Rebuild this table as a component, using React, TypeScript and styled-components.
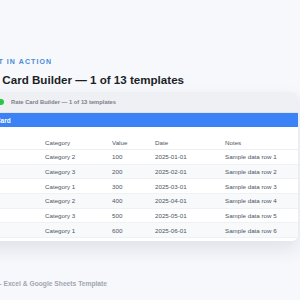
import * as React from 'react';
import styled, { createGlobalStyle } from 'styled-components';

const rows = [
    { item: 'Item 1', category: 'Category 2', value: 100, date: '2025-01-01', notes: 'Sample data row 1' },
    { item: 'Item 2', category: 'Category 3', value: 200, date: '2025-02-01', notes: 'Sample data row 2' },
    { item: 'Item 3', category: 'Category 1', value: 300, date: '2025-03-01', notes: 'Sample data row 3' },
    { item: 'Item 4', category: 'Category 2', value: 400, date: '2025-04-01', notes: 'Sample data row 4' },
    { item: 'Item 5', category: 'Category 3', value: 500, date: '2025-05-01', notes: 'Sample data row 5' },
    { item: 'Item 6', category: 'Category 1', value: 600, date: '2025-06-01', notes: 'Sample data row 6' },
];

const App = () => {
    return (
        <>
            <GlobalStyle />
            <Stage>
                <Section>
                    <Eyebrow>See it in action</Eyebrow>
                    <Heading>Rate Card Builder — 1 of 13 templates</Heading>

                    <Window.Frame>
                        <Window.TitleBar>
                            <Window.Dot $color="#ff5f57" />
                            <Window.Dot $color="#febc2e" />
                            <Window.Dot $color="#28c840" />
                            <Window.Title>Rate Card Builder — 1 of 13 templates</Window.Title>
                        </Window.TitleBar>

                        <Sheet.Banner>Rate Card</Sheet.Banner>

                        <Sheet.Table>
                            <colgroup>
                                <col style={{ width: 65 }} />
                                <col style={{ width: 67 }} />
                                <col style={{ width: 43 }} />
                                <col style={{ width: 70 }} />
                                <col />
                            </colgroup>
                            <thead>
                                <tr>
                                    <Sheet.Head>Item</Sheet.Head>
                                    <Sheet.Head>Category</Sheet.Head>
                                    <Sheet.Head>Value</Sheet.Head>
                                    <Sheet.Head>Date</Sheet.Head>
                                    <Sheet.Head>Notes</Sheet.Head>
                                </tr>
                            </thead>
                            <tbody>
                                {rows.map((row, i) => (
                                    <Sheet.Row key={row.item} $striped={i % 2 === 1}>
                                        <Sheet.Cell>{row.item}</Sheet.Cell>
                                        <Sheet.Cell>{row.category}</Sheet.Cell>
                                        <Sheet.Cell>{row.value}</Sheet.Cell>
                                        <Sheet.Cell>{row.date}</Sheet.Cell>
                                        <Sheet.Cell>{row.notes}</Sheet.Cell>
                                    </Sheet.Row>
                                ))}
                            </tbody>
                        </Sheet.Table>
                    </Window.Frame>

                    <Caption>Rate Card Builder - Excel &amp; Google Sheets Template</Caption>
                </Section>
            </Stage>
        </>
    );
};

export default App;

const GlobalStyle = createGlobalStyle`
    body {
        margin: 0;
        background: #f7f8fc;
        font-family: "Liberation Sans", Arial, sans-serif;
    }
`;

const Stage = styled.div`
    width: 300px;
    height: 300px;
    overflow: hidden;
`;

const Section = styled.div`
    width: 324px;
    margin-left: -26px;
    padding-top: 57px;
`;

const Eyebrow = styled.div`
    margin-left: 1px;
    font-size: 7px;
    font-weight: 700;
    letter-spacing: 1.1px;
    text-transform: uppercase;
    color: #4a8ad9;
    line-height: 9px;
`;

const Heading = styled.h2`
    margin: 6px 0 0;
    font-size: 11.6px;
    font-weight: 700;
    color: #1c1f26;
    line-height: 15px;
`;

const Window = {
    Frame: styled.div`
        margin-top: 5px;
        background: #ffffff;
        border-radius: 6px;
        overflow: hidden;
        box-shadow: 0 8px 18px rgba(20, 30, 60, 0.1);
    `,

    TitleBar: styled.div`
        display: flex;
        align-items: center;
        gap: 3px;
        height: 20px;
        padding: 0 6px;
        background: #eef0f4;
        border-bottom: 1px solid #e2e5ea;
    `,

    Dot: styled.span<{ $color: string }>`
        width: 6px;
        height: 6px;
        border-radius: 50%;
        background: ${(p) => p.$color};
    `,

    Title: styled.span`
        margin-left: 4px;
        font-size: 5.8px;
        font-weight: 700;
        color: #7a7f8a;
    `,
};

const Sheet = {
    Banner: styled.div`
        height: 14px;
        padding: 0 6px;
        display: flex;
        align-items: center;
        background: #3b82f6;
        color: #ffffff;
        font-size: 6.5px;
        font-weight: 700;
    `,

    Table: styled.table`
        width: 100%;
        margin-top: 8px;
        margin-bottom: 3px;
        border-collapse: collapse;
        table-layout: fixed;
    `,

    Head: styled.th`
        height: 14px;
        padding: 0 6px;
        text-align: left;
        font-size: 6.2px;
        font-weight: 400;
        color: #4b5563;
        border-bottom: 1px solid #eceef2;
    `,

    Row: styled.tr<{ $striped: boolean }>`
        background: ${(p) => (p.$striped ? '#f8f9fb' : '#ffffff')};
        border-bottom: 1px solid #f0f1f4;
    `,

    Cell: styled.td`
        height: 13.7px;
        padding: 0 6px;
        font-size: 6.2px;
        color: #4b5563;
        white-space: nowrap;
    `,
};

const Caption = styled.div`
    margin: 39px 0 0 -33px;
    font-size: 6.7px;
    font-weight: 700;
    color: #a2a6b0;
`;
